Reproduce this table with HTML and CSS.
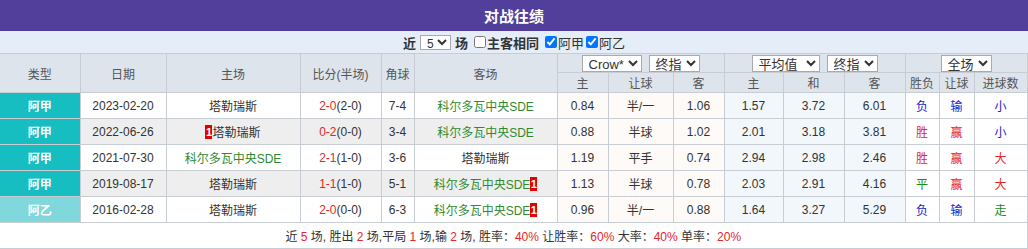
FILE: index.html
```html
<!DOCTYPE html>
<html lang="zh">
<head>
<meta charset="utf-8">
<title>对战往绩</title>
<link rel="stylesheet" href="styles.css">
</head>
<body>
<div class="panel">
  <div class="title">对战往绩</div>
  <div class="filter">
    <span>近</span>
    <select class="sel sel-n"><option>5</option><option>10</option></select>
    <span>场</span>
    <label class="chk"><input type="checkbox">主客相同</label>
    <label class="chk lg"><input type="checkbox" checked>阿甲</label><label class="chk lg"><input type="checkbox" checked>阿乙</label>
  </div>
  <table class="grid">
    <colgroup>
      <col style="width:80px"><col style="width:86px"><col style="width:134px"><col style="width:81px"><col style="width:33px"><col style="width:143px">
      <col style="width:51px"><col style="width:65px"><col style="width:51px">
      <col style="width:59px"><col style="width:61px"><col style="width:61px">
      <col style="width:34px"><col style="width:35px"><col style="width:53px">
    </colgroup>
    <thead>
      <tr class="h1">
        <th rowspan="2" class="first">类型</th>
        <th rowspan="2">日期</th>
        <th rowspan="2">主场</th>
        <th rowspan="2">比分(半场)</th>
        <th rowspan="2">角球</th>
        <th rowspan="2">客场</th>
        <th colspan="3"><div class="sels"><select class="sel w60"><option>Crow*</option></select><select class="sel w51"><option>终指</option></select></div></th>
        <th colspan="3"><div class="sels"><select class="sel w68"><option>平均值</option></select><select class="sel w51"><option>终指</option></select></div></th>
        <th colspan="3"><div class="sels"><select class="sel w51"><option>全场</option></select></div></th>
      </tr>
      <tr class="h2">
        <th>主</th><th>让球</th><th>客</th>
        <th>主</th><th>和</th><th>客</th>
        <th>胜负</th><th>让球</th><th>进球数</th>
      </tr>
    </thead>
    <tbody>
      <tr>
        <td class="lg-a first">阿甲</td><td>2023-02-20</td><td>塔勒瑞斯</td>
        <td><span class="red">2-0</span>(2-0)</td><td>7-4</td><td class="green">科尔多瓦中央SDE</td>
        <td class="c">0.84</td><td class="c">半/一</td><td class="c">1.06</td>
        <td class="a">1.57</td><td class="a">3.72</td><td class="a">6.01</td>
        <td class="r blue">负</td><td class="r blue">输</td><td class="r blue">小</td>
      </tr>
      <tr class="alt">
        <td class="lg-a first">阿甲</td><td>2022-06-26</td><td><span class="card">1</span>塔勒瑞斯</td>
        <td><span class="red">0-2</span>(0-0)</td><td>3-4</td><td class="green">科尔多瓦中央SDE</td>
        <td class="c">0.88</td><td class="c">半球</td><td class="c">1.02</td>
        <td class="a">2.01</td><td class="a">3.18</td><td class="a">3.81</td>
        <td class="r red">胜</td><td class="r red">赢</td><td class="r blue">小</td>
      </tr>
      <tr>
        <td class="lg-a first">阿甲</td><td>2021-07-30</td><td class="green">科尔多瓦中央SDE</td>
        <td><span class="red">2-1</span>(1-0)</td><td>3-6</td><td>塔勒瑞斯</td>
        <td class="c">1.19</td><td class="c">平手</td><td class="c">0.74</td>
        <td class="a">2.94</td><td class="a">2.98</td><td class="a">2.46</td>
        <td class="r red">胜</td><td class="r red">赢</td><td class="r red">大</td>
      </tr>
      <tr class="alt">
        <td class="lg-a first">阿甲</td><td>2019-08-17</td><td>塔勒瑞斯</td>
        <td><span class="red">1-1</span>(1-0)</td><td>5-1</td><td class="green">科尔多瓦中央SDE<span class="card">1</span></td>
        <td class="c">1.13</td><td class="c">半球</td><td class="c">0.78</td>
        <td class="a">2.03</td><td class="a">2.91</td><td class="a">4.16</td>
        <td class="r green2">平</td><td class="r red">赢</td><td class="r red">大</td>
      </tr>
      <tr>
        <td class="lg-b first">阿乙</td><td>2016-02-28</td><td>塔勒瑞斯</td>
        <td><span class="red">2-0</span>(0-0)</td><td>6-3</td><td class="green">科尔多瓦中央SDE<span class="card">1</span></td>
        <td class="c">0.96</td><td class="c">半/一</td><td class="c">0.88</td>
        <td class="a">1.64</td><td class="a">3.27</td><td class="a">5.29</td>
        <td class="r blue">负</td><td class="r blue">输</td><td class="r green2">走</td>
      </tr>
    </tbody>
    <tfoot>
      <tr>
        <td colspan="15" class="first">近 <span class="red">5</span> 场, 胜出 <span class="red">2</span> 场,平局 <span class="red">1</span> 场,输 <span class="red">2</span> 场, 胜率：<span class="red">40%</span> 让胜率：<span class="red">60%</span> 大率：<span class="red">40%</span> 单率：<span class="red">20%</span></td>
      </tr>
    </tfoot>
  </table>
</div>
</body>
</html>
```

FILE: styles.css
```css
* { box-sizing: border-box; }

body {
  margin: 0;
  font-family: "Liberation Sans", "Noto Sans CJK SC", sans-serif;
  font-size: 12px;
  color: #333;
  background: #fff;
}

.panel { width: 1028px; }

.title {
  height: 31px;
  background: #523f9b;
  color: #fff;
  font-weight: bold;
  font-size: 15px;
  display: flex;
  align-items: center;
  justify-content: center;
}

.filter {
  height: 22px;
  background: #e5edf8;
  display: flex;
  align-items: center;
  justify-content: center;
  font-size: 13px;
  font-weight: bold;
  color: #333;
  gap: 4px;
}

.filter .lg { font-weight: normal; }

.chk {
  display: inline-flex;
  align-items: center;
}

.filter .chk.lg + .chk.lg { margin-left: -4px; }

.chk input {
  width: 12px;
  height: 12px;
  margin: 0 1px 0 2px;
}

.sel {
  font-family: "Liberation Sans", "Noto Sans CJK SC", sans-serif;
  font-size: 13px;
  height: 17px;
  padding: 0 0 0 2px;
  border: 1px solid #aaa;
  border-radius: 0;
  background: #fff;
  color: #333;
}
.sel-n { width: 31px; height: 15px; font-size: 12px; }
.w60 { width: 60px; }
.w51 { width: 51px; }
.w68 { width: 68px; }

.grid {
  width: 1027px;
  border-collapse: collapse;
  table-layout: fixed;
}

.grid th, .grid td {
  border: 1px solid #c8cdd4;
  text-align: center;
  padding: 0;
  font-weight: normal;
  white-space: nowrap;
  overflow: hidden;
}

.grid .first { border-left: none; }

.grid thead th {
  background: #dde4ec;
  color: #555;
}

.h1 { height: 19px; }
.h2 { height: 20px; }

.sels {
  display: flex;
  justify-content: center;
  gap: 7px;
  padding-top: 1px;
}

.grid tbody tr { height: 26px; }
.grid tbody tr.alt td { background: #eee; }

.grid tbody tr td.lg-a {
  background: #17bec1;
  color: #fff;
  font-weight: bold;
}
.grid tbody tr td.lg-b {
  background: #80d8dc;
  color: #fff;
  font-weight: bold;
}

.grid tbody tr td.c { background: #fdfaf7; }
.grid tbody tr td.a { background: #f2f7fb; }
.grid tbody tr td.r { background: #fff; }

.red { color: #e3262b; }
.blue { color: #1a1acc; }
.green { color: #2f8a2f; }
.green2 { color: #1a8a1a; }

.card {
  display: inline-block;
  background: #e20000;
  color: #fff;
  font-weight: bold;
  font-size: 11px;
  line-height: 14px;
  width: 7px;
  text-align: center;
  vertical-align: -2px;
  overflow: hidden;
}

.grid tfoot td {
  height: 26px;
  color: #333;
  background: #fff;
}
```
